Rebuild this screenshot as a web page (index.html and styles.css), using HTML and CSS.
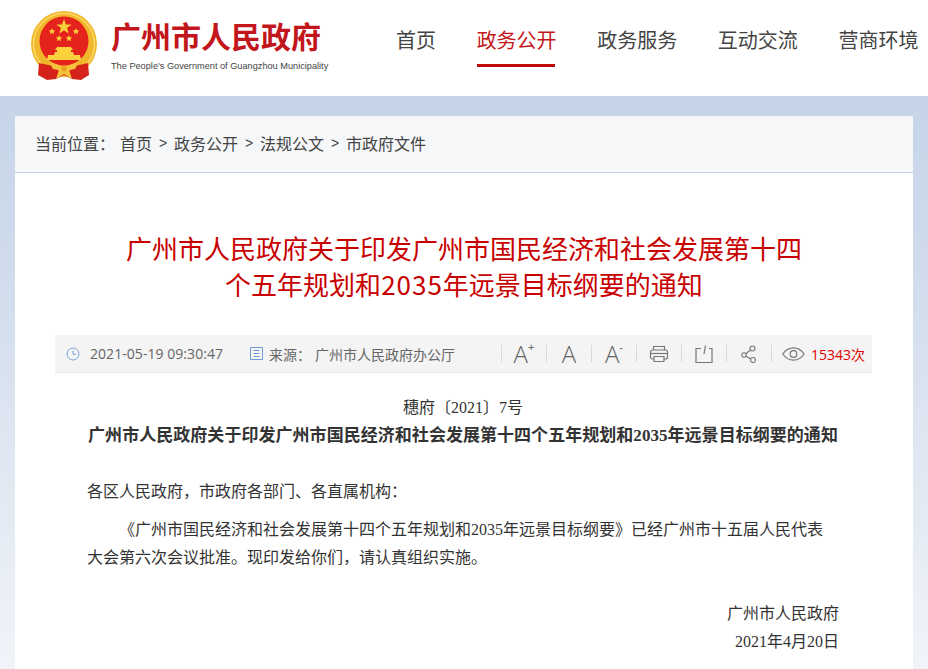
FILE: index.html
```html
<!DOCTYPE html>
<html lang="zh-CN">
<head>
    <meta charset="UTF-8">
    <meta name="viewport" content="width=device-width, initial-scale=1.0">
    <title>广州市人民政府</title>
    <link rel="stylesheet" href="styles.css">
</head>
<body>
    <!-- Header -->
    <div class="header">
        <a class="logo" href="#">
            <svg class="emblem" viewBox="0 0 66 69" width="66" height="69">
                <circle cx="33" cy="33" r="33" fill="#f0b62c"/>
                <circle cx="33" cy="33" r="30.500" fill="none" stroke="#ffd964" stroke-width="1.500"/>
                <circle cx="33" cy="30" r="24.500" fill="#e3231c"/>
                <polygon fill="#fbd23c" points="33,8 34.900,13.400 40.600,13.500 36,17 37.700,22.500 33,19.200 28.300,22.500 30,17 25.400,13.500 31.100,13.400"/>
                <polygon fill="#fbd23c" points="21,17 21.900,19.300 24.300,19.400 22.400,20.900 23.100,23.200 21,21.900 18.900,23.200 19.600,20.900 17.700,19.400 20.100,19.300"/>
                <polygon fill="#fbd23c" points="45,17 45.900,19.300 48.300,19.400 46.400,20.900 47.100,23.200 45,21.900 42.900,23.200 43.600,20.900 41.700,19.400 44.100,19.300"/>
                <polygon fill="#fbd23c" points="28,24 28.900,26.300 31.300,26.400 29.400,27.900 30.100,30.200 28,28.900 25.900,30.200 26.600,27.900 24.700,26.400 27.100,26.300"/>
                <polygon fill="#fbd23c" points="38,24 38.900,26.300 41.300,26.400 39.400,27.900 40.100,30.200 38,28.900 35.900,30.200 36.600,27.900 34.700,26.400 37.100,26.300"/>
                <path d="M26 36h14l2 3h-2v2h2l1 3H23l1-3h2v-2h-2z" fill="#fbd23c"/>
                <path d="M17 44h32l1 5H16z" fill="#fbd23c"/>
                <path d="M8 52l14 3 6 5h10l6-5 13-3 1 12-8 5-9-1-8-4-8 4-9 1-9-5z" fill="#d5231c"/>
                <path d="M19 52c5 0 10 2 14 5 4-3 9-5 14-5l-3 6-6 1 3 9-8-5-8 5 3-9-6-1z" fill="#f5c23a"/>
                <circle cx="33" cy="58" r="2.500" fill="#e8a020"/>
            </svg>
            <div class="logo-text">
                <div class="logo-title">广州市人民政府</div>
                <div class="logo-sub">The People's Government of Guangzhou Municipality</div>
            </div>
        </a>
        <div class="nav">
            <a href="#">首页</a>
            <a href="#" class="active">政务公开</a>
            <a href="#">政务服务</a>
            <a href="#">互动交流</a>
            <a href="#">营商环境</a>
        </div>
    </div>

    <div class="main">
        <div class="card">
            <!-- Breadcrumb -->
            <div class="crumbs">
                <span class="crumbs-label">当前位置：</span>
                <a href="#">首页</a><span class="sep">&gt;</span>
                <a href="#">政务公开</a><span class="sep">&gt;</span>
                <a href="#">法规公文</a><span class="sep">&gt;</span>
                <a href="#">市政府文件</a>
            </div>

            <h1 class="title">广州市人民政府关于印发广州市国民经济和社会发展第十四<br>个五年规划和<span class="num">2035</span>年远景目标纲要的通知</h1>

            <!-- Info bar -->
            <div class="info">
                <svg class="ico-clock" viewBox="0 0 14 14" width="14" height="14">
                    <circle cx="7" cy="7" r="6" fill="none" stroke="#7da3dc" stroke-width="1"/>
                    <path d="M7 3.500V7.300H10" fill="none" stroke="#7da3dc" stroke-width="1"/>
                </svg>
                <span class="date">2021-05-19 09:30:47</span>
                <svg class="ico-doc" viewBox="0 0 13 13" width="13" height="13">
                    <path d="M.5.5h12v12H.5z" fill="none" stroke="#6f9bdc"/>
                    <path d="M3.500 3.500h6M3.500 6.500h6M3.500 9.500h6" fill="none" stroke="#6f9bdc"/>
                </svg>
                <span class="source-label">来源：</span>
                <span class="source">广州市人民政府办公厅</span>
                <div class="tools">
                    <span class="tool"><span class="font-a">A</span><span class="font-mark">+</span></span>
                    <span class="tool"><span class="font-a">A</span></span>
                    <span class="tool"><span class="font-a">A</span><span class="font-mark">-</span></span>
                    <span class="tool">
                        <svg viewBox="0 0 20 18" width="20" height="18" fill="none" stroke="#777" stroke-width="1.200">
                            <path d="M4.500 5V1.500h11V5"/>
                            <rect x="1.500" y="5" width="17" height="9" rx="2"/>
                            <path d="M1.500 8.500h17"/>
                            <path d="M5 11.500h10v5H5z" fill="#f4f4f4"/>
                        </svg>
                    </span>
                    <span class="tool">
                        <svg viewBox="0 0 18 18" width="18" height="18" fill="none" stroke="#777" stroke-width="1.200">
                            <path d="M6 3.500H1v14h16v-14h-3"/>
                            <path d="M10.500.5L9 9"/>
                        </svg>
                    </span>
                    <span class="tool">
                        <svg viewBox="0 0 16 18" width="16" height="18" fill="none" stroke="#777" stroke-width="1.100">
                            <circle cx="11.500" cy="3.500" r="2.500"/>
                            <circle cx="3" cy="10" r="2.200"/>
                            <circle cx="12" cy="15" r="2.500"/>
                            <path d="M9.500 5L4.800 8.700M5 11.200l4.800 2.700"/>
                        </svg>
                    </span>
                    <span class="tool tool-views">
                        <svg viewBox="0 0 23 14" width="23" height="14" fill="none" stroke="#777" stroke-width="1.200">
                            <path d="M.8 7C4 2.500 7.500.8 11.500.8S19 2.500 22.200 7C19 11.500 15.500 13.200 11.500 13.200S4 11.500.8 7z"/>
                            <circle cx="11.500" cy="7" r="3.300"/>
                        </svg>
                        <span class="views">15343次</span>
                    </span>
                </div>
            </div>

            <!-- Article -->
            <div class="content">
                <div class="doc-no">穗府〔2021〕7号</div>
                <div class="doc-title">广州市人民政府关于印发广州市国民经济和社会发展第十四个五年规划和2035年远景目标纲要的通知</div>
                <p class="to">各区人民政府，市政府各部门、各直属机构：</p>
                <p class="para">《广州市国民经济和社会发展第十四个五年规划和2035年远景目标纲要》已经广州市十五届人民代表大会第六次会议批准。现印发给你们，请认真组织实施。</p>
                <div class="sign">广州市人民政府</div>
                <div class="sign sign-date">2021年4月20日</div>
            </div>
        </div>
    </div>
</body>
</html>
```

FILE: styles.css
```css
html, body {
    height: 100%;
}

body {
    display: flex;
    flex-direction: column;
    margin: 0;
    padding: 0;
    overflow: hidden;
    background: white;
    font-family: 'Noto Sans CJK SC', sans-serif;
    color: #333;
}

a {
    color: inherit;
    text-decoration: none;
}

/* Header */
.header {
    display: flex;
    flex: none;
    align-items: flex-start;
    justify-content: space-between;
    height: 96px;
    padding: 0 9.6px 0 31px;
    background: white;
}

.logo {
    display: flex;
    align-items: flex-start;
    gap: 14px;
    padding-top: 11px;
}

.emblem {
    flex: none;
}

.logo-title {
    margin-top: 5px;
    font-size: 30px;
    line-height: 38px;
    font-weight: 700;
    color: #c3161c;
}

.logo-sub {
    margin-top: 5px;
    font-family: 'Liberation Sans', Arial, sans-serif;
    font-size: 9.2px;
    line-height: 14px;
    color: #444;
    white-space: nowrap;
}

.nav {
    display: flex;
    gap: 40.6px;
}

.nav a {
    position: relative;
    display: block;
    height: 67px;
    padding-top: 25px;
    box-sizing: border-box;
    font-size: 20px;
    line-height: 30px;
    color: #444;
}

.nav a.active {
    color: #c3161c;
}

.nav a.active::after {
    content: "";
    position: absolute;
    left: 0;
    right: 2px;
    bottom: 0;
    height: 3px;
    background: #c00c0c;
}

/* Main card */
.main {
    display: flex;
    flex: 1;
    min-height: 0;
    padding: 20px 15px 0;
    background: linear-gradient(#c5d4e8 0%, #d0dcec 30%, #f1f4f9 100%);
}

.card {
    flex: 1;
    background: white;
}

.crumbs {
    display: flex;
    align-items: center;
    box-sizing: border-box;
    height: 57px;
    padding: 0 0 2px 20px;
    background: #f5f7f9;
    border-bottom: 1px solid #c5d4e8;
    font-size: 16px;
    color: #444;
}

.crumbs-label {
    width: 85px;
}

.crumbs .sep {
    width: 22px;
    text-align: center;
    font-family: 'Liberation Sans', sans-serif;
    font-size: 14px;
}

.title {
    margin: 57px 0 33px;
    font-size: 26px;
    line-height: 36px;
    font-weight: 400;
    text-align: center;
    color: #c80000;
}

.title .num {
    letter-spacing: 1px;
}

/* Info bar */
.info {
    display: flex;
    align-items: center;
    height: 37px;
    margin: 0 41px 0 40px;
    padding-left: 11px;
    background: #f4f4f4;
    border-bottom: 1px solid #e5e5e5;
    font-size: 14px;
    color: #666;
}

.date {
    width: 160px;
    margin-left: 10px;
    font-family: 'Open Sans', sans-serif;
    font-size: 14px;
    letter-spacing: 0.05px;
    white-space: nowrap;
}

.source-label {
    width: 46px;
    margin-left: 6px;
}

.tools {
    display: flex;
    align-items: center;
    margin-left: auto;
    padding-right: 7px;
}

.tool {
    display: flex;
    align-items: center;
    justify-content: center;
    width: 45px;
    height: 17px;
    border-left: 1px solid #d9d9d9;
    box-sizing: border-box;
}

.tool-views {
    width: auto;
    gap: 6px;
    padding-left: 10px;
}

.font-a {
    font-family: 'Open Sans', sans-serif;
    font-size: 24px;
    font-weight: 300;
    line-height: 17px;
    color: #666;
}

.font-mark {
    align-self: flex-start;
    margin-top: -3px;
    font-family: 'Liberation Sans', sans-serif;
    font-size: 11px;
    line-height: 11px;
    color: #666;
}

.views {
    font-family: 'Open Sans', 'Noto Sans CJK SC', sans-serif;
    font-size: 14px;
    color: #e00000;
}

/* Article */
.content {
    padding: 21px 74px 0 72px;
    font-family: 'Liberation Serif', 'Noto Sans CJK SC', serif;
    font-size: 16px;
    line-height: 28px;
}

.doc-no {
    text-align: center;
}

.doc-title {
    font-size: 17px;
    font-weight: 700;
    letter-spacing: 0.04px;
    text-align: center;
    white-space: nowrap;
}

.content p {
    margin: 0 0 10px;
}

.to {
    padding-top: 28px;
}

.para {
    padding-right: 10px;
    text-indent: 2em;
}

.sign {
    text-align: right;
}

.para + .sign {
    margin-top: 28px;
}
```
